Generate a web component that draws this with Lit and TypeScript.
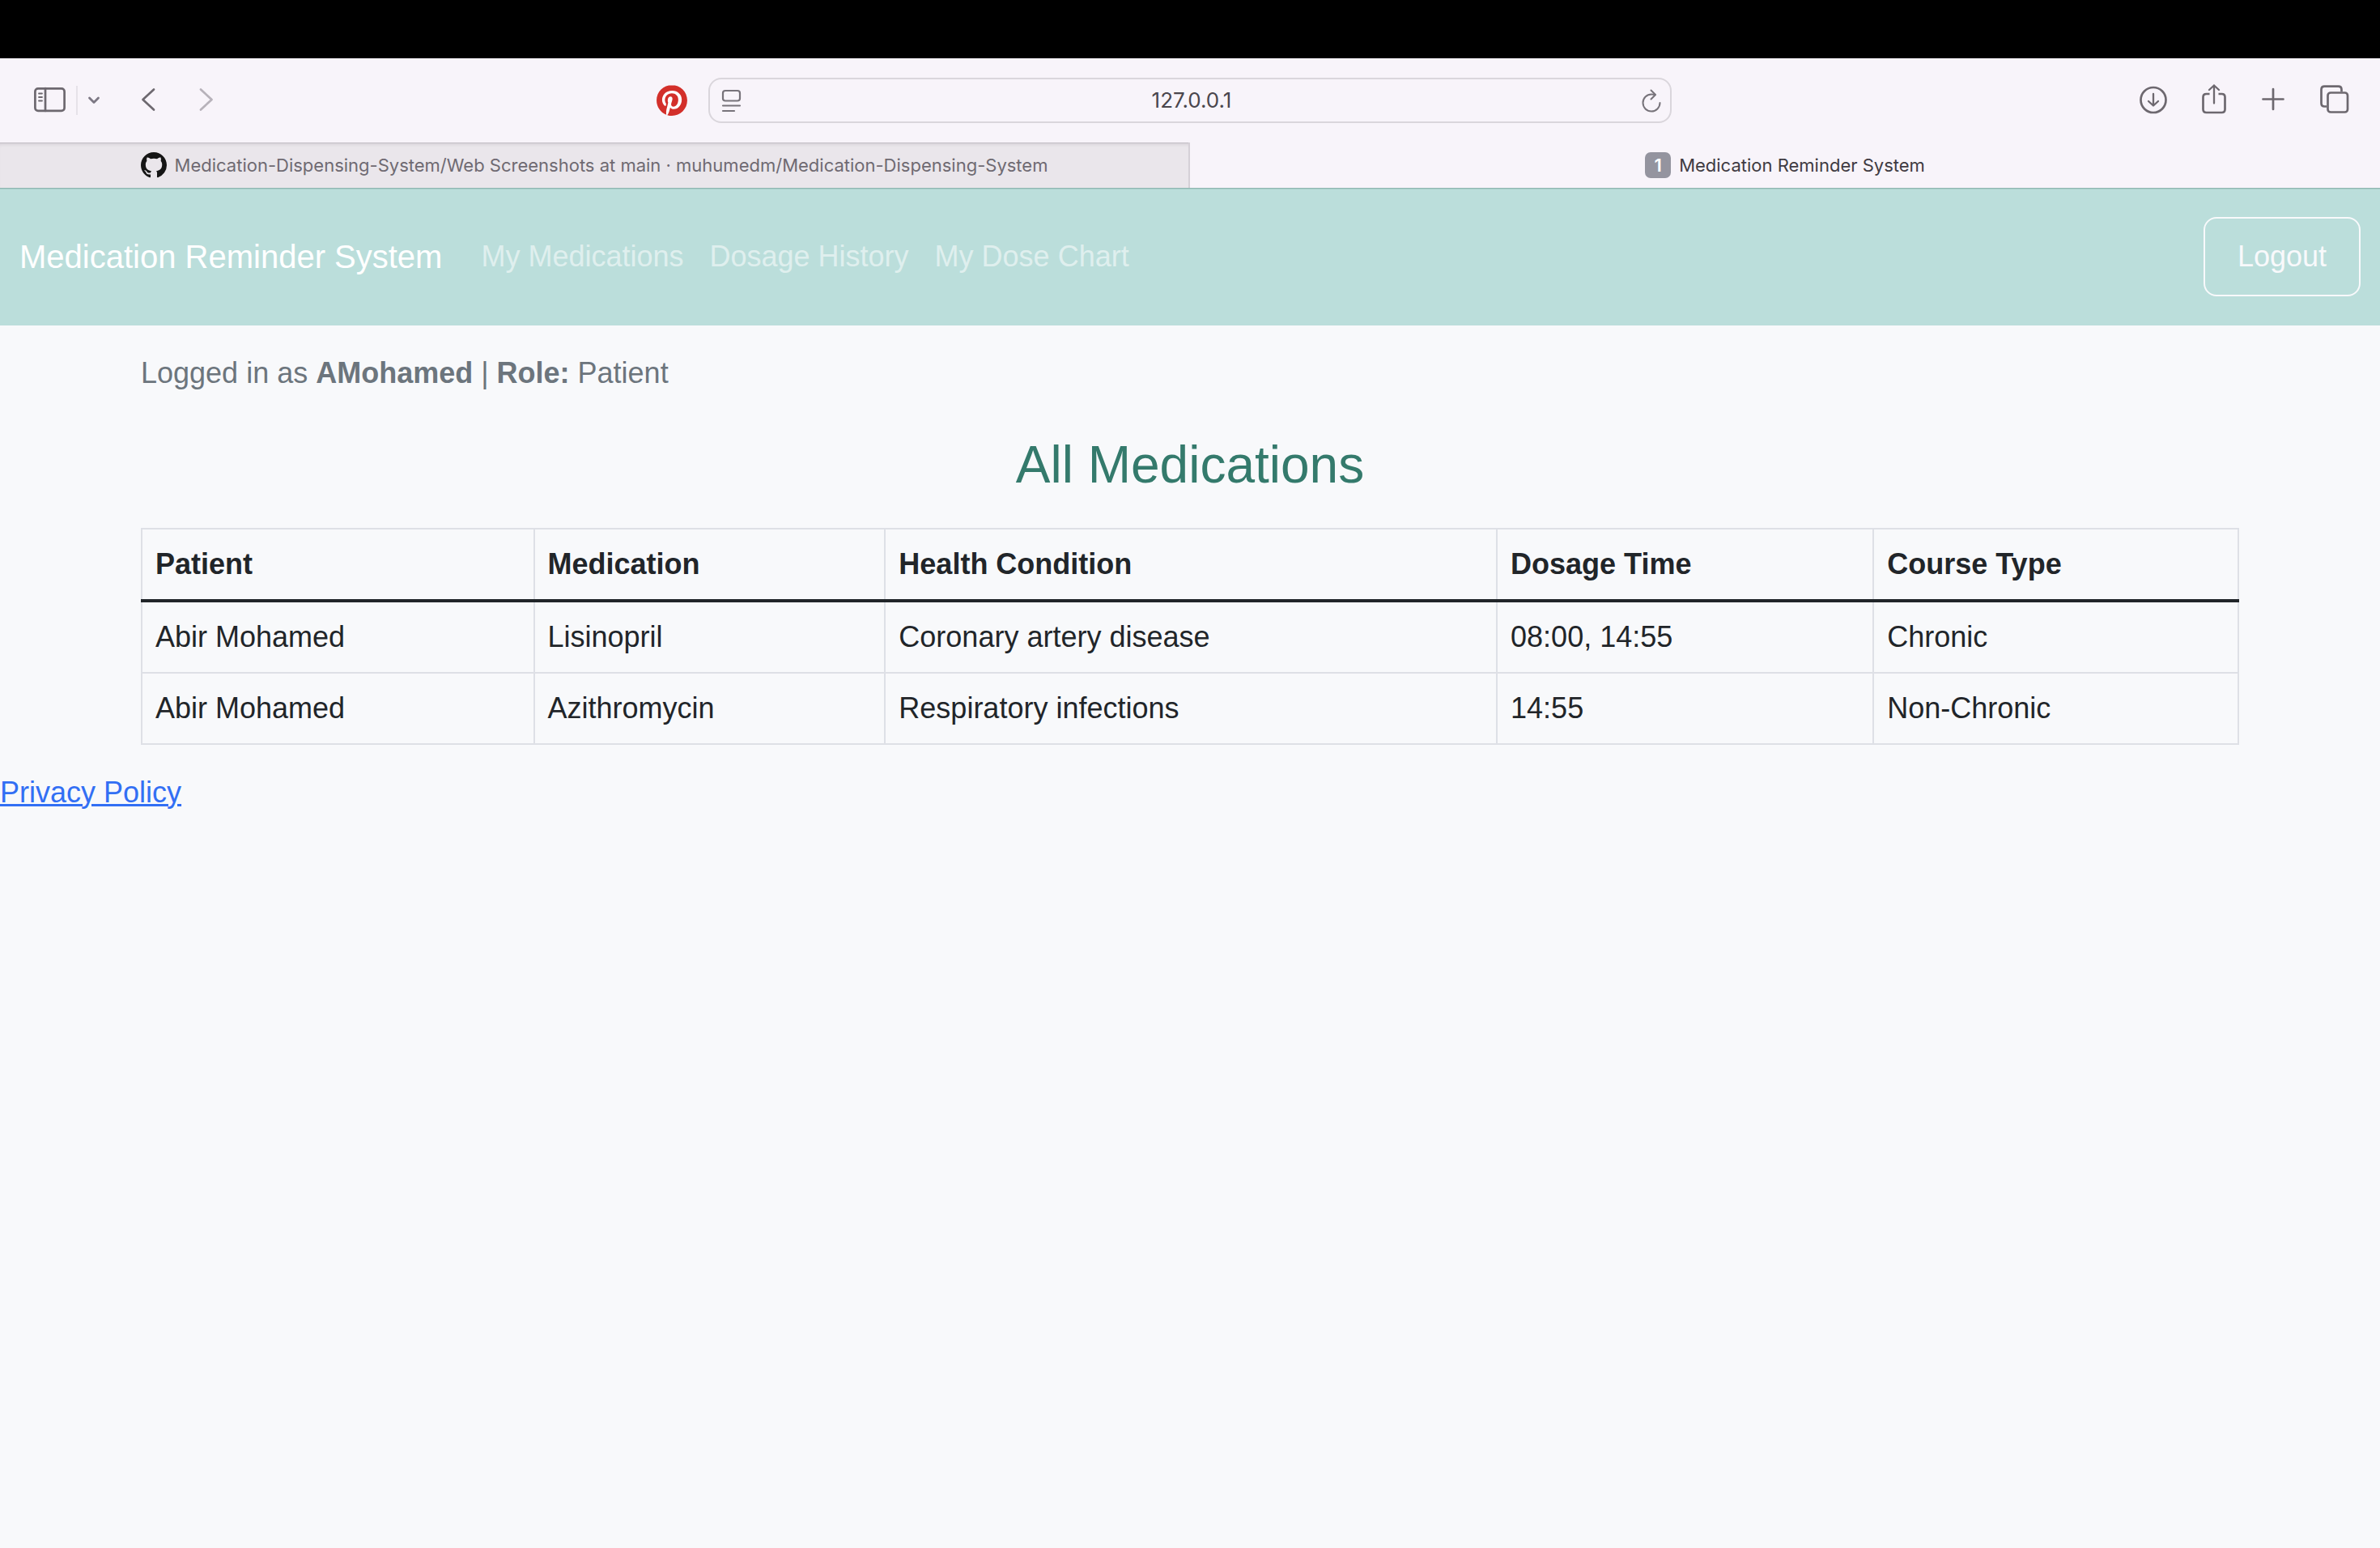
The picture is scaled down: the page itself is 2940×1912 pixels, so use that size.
import { LitElement, html, css, svg } from "lit";
import { customElement, state } from "lit/decorators.js";

interface Medication {
  patient: string;
  name: string;
  condition: string;
  times: string;
  course: string;
}

const icon = (body: unknown) => html`
  <svg class="icon" viewBox="0 0 40 40" fill="none" stroke="currentColor" stroke-width="2.7"
    stroke-linecap="round" stroke-linejoin="round" aria-hidden="true">${body}</svg>
`;

const sidebarIcon = icon(svg`
  <rect x="1.4" y="5.3" width="36.2" height="27.6" rx="3.6"></rect>
  <path d="M14 5v28"></path>
  <path d="M6 11.500h4M6 16h4M6 20.500h4" stroke-width="1.800"></path>
`);
const backIcon = icon(svg`<path d="M26 6.500 12.500 19l13.500 12.500"></path>`);
const forwardIcon = icon(svg`<path d="M13 6.500 26.500 19 13 31.500"></path>`);
const downloadIcon = icon(svg`
  <circle cx="21" cy="19.500" r="15.500"></circle>
  <path d="M21 12v14M15 21l6 5.500 6-5.500" stroke-width="2.300"></path>
`);
const shareIcon = icon(svg`
  <path d="M15.500 12H11.500q-4 0-4 4v15q0 4 4 4h19q4 0 4-4V16q0-4-4-4h-4" stroke-linecap="butt"></path>
  <path d="M21 23.500V1.500M15 7l6-5.500 6 5.500" stroke-width="2.300"></path>
`);
const plusIcon = icon(svg`<path d="M19 6v25M6.500 18.500h25"></path>`);
const overviewIcon = icon(svg`
  <path d="M10 27.500H7.500q-4 0-4-4V6.700q0-4 4-4h17q4 0 4 4v2.500" stroke-linecap="butt"></path>
  <rect x="11.500" y="10.500" width="24.500" height="24" rx="3.600"></rect>
`);

@customElement("browser-chrome")
export class BrowserChrome extends LitElement {
  static styles = css`
    :host {
      display: block;
      font-family: Inter, "Liberation Sans", sans-serif;
      color: #3f3b42;
      background: #f8f4fa;
    }
    button {
      font: inherit;
      color: inherit;
      background: none;
      border: 0;
      padding: 0;
      margin: 0;
    }
    .menu-strip {
      height: 72px;
      background: #000;
    }
    .toolbar {
      display: grid;
      grid-template-columns: 1fr minmax(0, 1190px) 1fr;
      align-items: center;
      height: 104px;
      color: #6d686f;
    }
    .side {
      display: flex;
      align-items: center;
    }
    .left {
      padding: 0 26px 0 42px;
    }
    .right {
      justify-content: flex-end;
      gap: 35px;
      padding-right: 36px;
    }
    .tool {
      display: flex;
    }
    .icon {
      display: block;
      width: 40px;
      height: 40px;
    }
    .divider {
      width: 2px;
      height: 36px;
      margin: 0 12px;
      background: #e6e2e9;
    }
    .small {
      display: block;
      width: 16px;
      height: 16px;
      color: #7d7884;
    }
    .back {
      margin-left: 40px;
    }
    .forward {
      margin-left: 31px;
      color: #b7b2ba;
    }
    .pin {
      margin-left: auto;
    }
    .pin-logo {
      display: block;
      width: 38px;
      height: 38px;
    }
    .address {
      display: flex;
      align-items: center;
      box-sizing: border-box;
      height: 56px;
      padding: 0 10px 0 14px;
      border: 2px solid #dad6dc;
      border-radius: 16px;
      color: #77737a;
    }
    .field-icon {
      display: block;
      width: 26px;
      height: 30px;
    }
    .url {
      flex: 1;
      min-width: 0;
      padding: 0;
      border: 0;
      background: none;
      font: 26px/30px Inter, "Liberation Sans", sans-serif;
      color: #4a464d;
      text-align: center;
      outline: none;
    }
    .tabs {
      display: grid;
      grid-template-columns: 1fr 1fr;
      height: 56px;
    }
    .tab {
      display: flex;
      align-items: center;
      justify-content: center;
      gap: 10px;
      min-width: 0;
      font-size: 22px;
      line-height: 30px;
      white-space: nowrap;
    }
    .tab.idle {
      color: #6f6a72;
      background: #eae6eb;
      border-right: 2px solid #d5d0d7;
      box-shadow: inset 0 1px 0 #c3bec5, inset 0 5px 4px -3px #cfcad1;
    }
    .favicon {
      display: block;
      width: 32px;
      height: 32px;
      color: #151515;
    }
    .badge {
      width: 32px;
      height: 32px;
      border-radius: 7px;
      background: #94949f;
      color: #fff;
      font-weight: 600;
      line-height: 32px;
      text-align: center;
    }
  `;

  render() {
    return html`
      <div class="menu-strip"></div>
      <div class="toolbar">
        <div class="side left">
          <button class="tool" aria-label="Show sidebar">${sidebarIcon}</button>
          <span class="divider"></span>
          <button class="tool" aria-label="Tab groups">
            <svg class="small" viewBox="0 0 16 16" fill="none" stroke="currentColor" stroke-width="2.800"
              stroke-linecap="round" stroke-linejoin="round" aria-hidden="true">
              <path d="M2.500 5 8 10.500 13.500 5"></path>
            </svg>
          </button>
          <button class="tool back" aria-label="Back">${backIcon}</button>
          <button class="tool forward" aria-label="Forward">${forwardIcon}</button>
          <button class="tool pin" aria-label="Pinterest">
            <svg class="pin-logo" viewBox="0 0 24 24" aria-hidden="true">
              <circle cx="12" cy="12" r="11.500" fill="#fff"></circle>
              <path fill="#d32f2a" d="M12.017 0C5.396 0 .029 5.367.029 11.987c0 5.079 3.158 9.417 7.618 11.162-.105-.949-.199-2.403.041-3.439.219-.937 1.406-5.957 1.406-5.957s-.359-.72-.359-1.781c0-1.663.967-2.911 2.168-2.911 1.024 0 1.518.769 1.518 1.688 0 1.029-.653 2.567-.992 3.992-.285 1.193.6 2.165 1.775 2.165 2.128 0 3.768-2.245 3.768-5.487 0-2.861-2.063-4.869-5.008-4.869-3.41 0-5.409 2.562-5.409 5.199 0 1.033.394 2.143.889 2.741.099.12.112.225.085.345-.09.375-.293 1.199-.334 1.363-.053.225-.172.271-.401.165-1.495-.69-2.433-2.878-2.433-4.646 0-3.776 2.748-7.252 7.92-7.252 4.158 0 7.392 2.967 7.392 6.923 0 4.135-2.607 7.462-6.233 7.462-1.214 0-2.354-.629-2.758-1.379l-.749 2.848c-.269 1.045-1.004 2.352-1.498 3.146 1.123.345 2.306.535 3.55.535 6.607 0 11.985-5.365 11.985-11.987C23.97 5.39 18.592.026 11.985.026z"></path>
            </svg>
          </button>
        </div>
        <div class="address">
          <svg class="field-icon" viewBox="0 0 26 30" fill="none" stroke="currentColor" stroke-width="2.200"
            stroke-linecap="round" aria-hidden="true">
            <rect x="2" y="3" width="21" height="12.500" rx="3"></rect>
            <path d="M2 21.500h21M2 28h14"></path>
          </svg>
          <input class="url" type="text" aria-label="Address" .value=${"127.0.0.1"} />
          <button class="tool" aria-label="Reload">
            <svg class="field-icon" viewBox="0 0 26 30" fill="none" stroke="currentColor" stroke-width="2"
              stroke-linecap="round" stroke-linejoin="round" aria-hidden="true">
              <path d="M23.500 18A10.500 10.500 0 1 1 13 7.500q2.500 0 4.500.500"></path>
              <path d="M12.500 2.500 18 8l-5.500 5.500"></path>
            </svg>
          </button>
        </div>
        <div class="side right">
          <button class="tool" aria-label="Downloads">${downloadIcon}</button>
          <button class="tool" aria-label="Share">${shareIcon}</button>
          <button class="tool" aria-label="New tab">${plusIcon}</button>
          <button class="tool" aria-label="Tab overview">${overviewIcon}</button>
        </div>
      </div>
      <div class="tabs">
        <button class="tab idle">
          <svg class="favicon" viewBox="0 0 16 16" fill="currentColor" aria-hidden="true">
            <path d="M8 0C3.580 0 0 3.580 0 8c0 3.540 2.290 6.530 5.470 7.590.4.070.55-.17.55-.38 0-.19-.01-.82-.01-1.490-2.010.37-2.530-.49-2.690-.94-.09-.23-.48-.94-.82-1.130-.28-.15-.68-.52-.01-.53.63-.01 1.080.58 1.230.82.72 1.210 1.870.87 2.330.66.07-.52.28-.87.51-1.070-1.780-.2-3.640-.89-3.640-3.950 0-.87.31-1.590.82-2.150-.08-.2-.36-1.020.08-2.120 0 0 .67-.21 2.200.82.64-.18 1.320-.27 2-.27s1.360.09 2 .27c1.530-1.040 2.200-.82 2.200-.82.44 1.100.16 1.920.08 2.120.51.56.82 1.270.82 2.150 0 3.070-1.870 3.750-3.650 3.950.29.25.54.73.54 1.480 0 1.070-.01 1.930-.01 2.200 0 .21.15.46.55.38A8.010 8.010 0 0 0 16 8c0-4.420-3.580-8-8-8"></path>
          </svg>
          <span>Medication-Dispensing-System/Web Screenshots at main · muhumedm/Medication-Dispensing-System</span>
        </button>
        <button class="tab">
          <span class="badge">1</span>
          <span>Medication Reminder System</span>
        </button>
      </div>
    `;
  }
}

@customElement("app-root")
export class AppRoot extends LitElement {
  static styles = css`
    :host {
      display: block;
      min-height: 100vh;
      background: #f8f9fb;
      font-family: "Liberation Sans", Arial, sans-serif;
      font-size: 36px;
      line-height: 54px;
      color: #212529;
    }
    .navbar {
      display: flex;
      align-items: center;
      padding: 36px 24px;
      background: #bbdedb;
      box-shadow: inset 0 1px 0 #8fb6b1, inset 0 2px 0 #a9cfca;
    }
    .brand {
      margin-right: 32px;
      font-size: 40px;
      line-height: 60px;
      color: #fff;
      text-decoration: none;
    }
    .links {
      display: flex;
      margin: 0;
      padding: 0;
      list-style: none;
    }
    .link {
      display: block;
      padding: 0 16px;
      color: rgba(255, 255, 255, 0.55);
      text-decoration: none;
    }
    .logout {
      margin: 0 0 0 auto;
      padding: 20px 40px;
      border: 2px solid #f8f9fb;
      border-radius: 16px;
      background: none;
      font: inherit;
      color: #f8f9fb;
    }
    .container {
      box-sizing: border-box;
      max-width: 2640px;
      margin: 32px auto;
      padding: 0 24px;
    }
    .session {
      margin: 0 0 48px;
      color: #6c757d;
    }
    .title {
      margin: 0 0 40px;
      font-size: 64px;
      font-weight: 400;
      line-height: 76px;
      text-align: center;
      color: #347a6c;
    }
    .table {
      width: 100%;
      border-collapse: collapse;
      text-align: left;
    }
    .cell {
      padding: 16px;
      border: 2px solid #dee0e6;
    }
    .head .cell {
      border-bottom: 4px solid #212529;
    }
    .privacy {
      color: #326ff4;
      text-decoration: underline;
      text-decoration-thickness: 3px;
    }
  `;

  @state() private medications: Medication[] = [
    { patient: "Abir Mohamed", name: "Lisinopril", condition: "Coronary artery disease", times: "08:00, 14:55", course: "Chronic" },
    { patient: "Abir Mohamed", name: "Azithromycin", condition: "Respiratory infections", times: "14:55", course: "Non-Chronic" },
  ];

  private columns = ["Patient", "Medication", "Health Condition", "Dosage Time", "Course Type"];
  private links = ["My Medications", "Dosage History", "My Dose Chart"];

  render() {
    return html`
      <browser-chrome></browser-chrome>
      <nav class="navbar">
        <a class="brand" href="#">Medication Reminder System</a>
        <ul class="links">
          ${this.links.map((label) => html`<li><a class="link" href="#">${label}</a></li>`)}
        </ul>
        <button class="logout">Logout</button>
      </nav>
      <main class="container">
        <p class="session">Logged in as <strong>AMohamed</strong> | <strong>Role:</strong> Patient</p>
        <h2 class="title">All Medications</h2>
        <table class="table">
          <thead>
            <tr class="head">${this.columns.map((name) => html`<th class="cell" scope="col">${name}</th>`)}</tr>
          </thead>
          <tbody>
            ${this.medications.map((m) => html`
              <tr>
                <td class="cell">${m.patient}</td>
                <td class="cell">${m.name}</td>
                <td class="cell">${m.condition}</td>
                <td class="cell">${m.times}</td>
                <td class="cell">${m.course}</td>
              </tr>
            `)}
          </tbody>
        </table>
      </main>
      <footer><a class="privacy" href="#">Privacy Policy</a></footer>
    `;
  }
}
